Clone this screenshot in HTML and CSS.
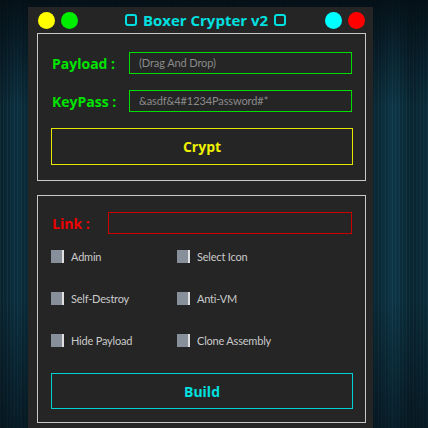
FILE: index.html
```html
<!DOCTYPE html>
<html>
<head>
    <meta charset="UTF-8">
    <meta name="viewport" content="width=device-width, initial-scale=1.0">
    <title>Boxer Crypter v2</title>
    <link rel="stylesheet" href="styles.css">
</head>
<body>
    <div class="window">
        <div class="titleBar">
            <span class="dot yellow"></span>
            <span class="dot green"></span>
            <div class="title"><span class="box"></span>Boxer Crypter v2<span class="box"></span></div>
            <span class="dot cyan"></span>
            <span class="dot red"></span>
        </div>

        <div class="panel cryptPanel">
            <div class="row">
                <label class="label green">Payload :</label>
                <div class="field greenField">(Drag And Drop)</div>
            </div>
            <div class="row">
                <label class="label green">KeyPass :</label>
                <div class="field greenField">&amp;asdf&amp;4#1234Password#*</div>
            </div>
            <button class="btn cryptBtn">Crypt</button>
        </div>

        <div class="panel buildPanel">
            <div class="row linkRow">
                <label class="label red linkLabel">Link :</label>
                <div class="field redField"></div>
            </div>
            <div class="options">
                <div class="opt"><span class="check"></span>Admin</div>
                <div class="opt"><span class="check"></span>Select Icon</div>
                <div class="opt"><span class="check"></span>Self-Destroy</div>
                <div class="opt"><span class="check"></span>Anti-VM</div>
                <div class="opt"><span class="check"></span>Hide Payload</div>
                <div class="opt"><span class="check"></span>Clone Assembly</div>
            </div>
            <button class="btn buildBtn">Build</button>
        </div>
    </div>
</body>
</html>
```

FILE: styles.css
```css
*{ margin: 0; padding: 0; box-sizing: border-box; }
html, body{ height: 100%; overflow: hidden; }
body{
    font-family: "Open Sans", "Noto Sans", sans-serif;
    background:
        linear-gradient(to bottom, rgba(4,12,18,0.85) 0%, rgba(4,12,18,0) 25%, rgba(4,12,18,0) 70%, rgba(4,12,18,0.55) 100%),
        repeating-linear-gradient(to right, rgba(255,255,255,0.03) 0 1px, rgba(0,0,0,0.12) 1px 3px, rgba(40,110,130,0.08) 3px 4px, rgba(0,0,0,0.05) 4px 7px),
        linear-gradient(to right, #0a2430 0%, #0d3344 4%, #0a2633 8%, #0c2e3c 14%, #092330 40%, #0b2a38 88%, #0f3a4c 92%, #0a2835 96%, #0c2f3e 100%);
}

.window{ width: 345px; height: 430px; margin: 7px 0 0 28px; background: #252525; padding: 0 7px 0 9px; }

.titleBar{ height: 26px; display: flex; align-items: center; padding: 0 1px 0 1px; }
.dot{ width: 17px; height: 17px; border-radius: 50%; margin-right: 6px; }
.dot.yellow{ background: #ffff00; }
.dot.green{ background: #00ee00; }
.dot.cyan{ background: #00ffff; margin-right: 6px; }
.dot.red{ background: #ff0000; margin-right: 0; }
.title{ flex: 1; display: flex; align-items: center; justify-content: center; color: #00e0e0; font-weight: bold; font-size: 15px; padding-left: 2px; }
.box{ display: inline-block; width: 12px; height: 12px; border: 2px solid #00e0e0; border-radius: 3px; margin: 0 6px; }

.panel{ border: 1px solid #c8c8c8; padding: 0 13px 0 13px; }
.cryptPanel{ height: 148px; padding-top: 18px; }
.buildPanel{ height: 228px; margin-top: 14px; padding-top: 16px; }

.row{ display: flex; align-items: center; height: 22px; margin-bottom: 16px; }
.linkRow{ margin-bottom: 12px; }
.label{ font-weight: bold; font-size: 14px; width: 78px; padding-left: 1px; }
.label.green{ color: #00e400; }
.label.red{ color: #ee0000; }
.linkLabel{ width: 57px; }
.field{ flex: 1; height: 22px; border: 1px solid; font-family: Lato, "Open Sans", sans-serif; font-size: 11px; letter-spacing: -0.1px; color: #8a8a8a; padding: 0 9px; line-height: 20px; white-space: nowrap; }
.greenField{ border-color: #00dd00; }
.redField{ border-color: #cc0000; }

.btn{ display: block; width: 302px; height: 37px; margin-left: 0; background: transparent; border: 1px solid; font-family: inherit; font-weight: bold; font-size: 14px; }
.cryptBtn{ border-color: #e6e600; color: #f0f000; }
.buildBtn{ border-color: #00d0d0; color: #00e0e0; height: 36px; margin-top: 23px; }

.options{ display: grid; grid-template-columns: 126px 1fr; row-gap: 22px; }
.opt{ display: flex; align-items: center; height: 20px; font-family: Lato, "Open Sans", sans-serif; font-size: 11px; letter-spacing: -0.2px; color: #cacaca; }
.check{ width: 13px; height: 13px; background: #87909a; border-right: 2px solid #e0e0e0; margin-right: 7px; }
```
